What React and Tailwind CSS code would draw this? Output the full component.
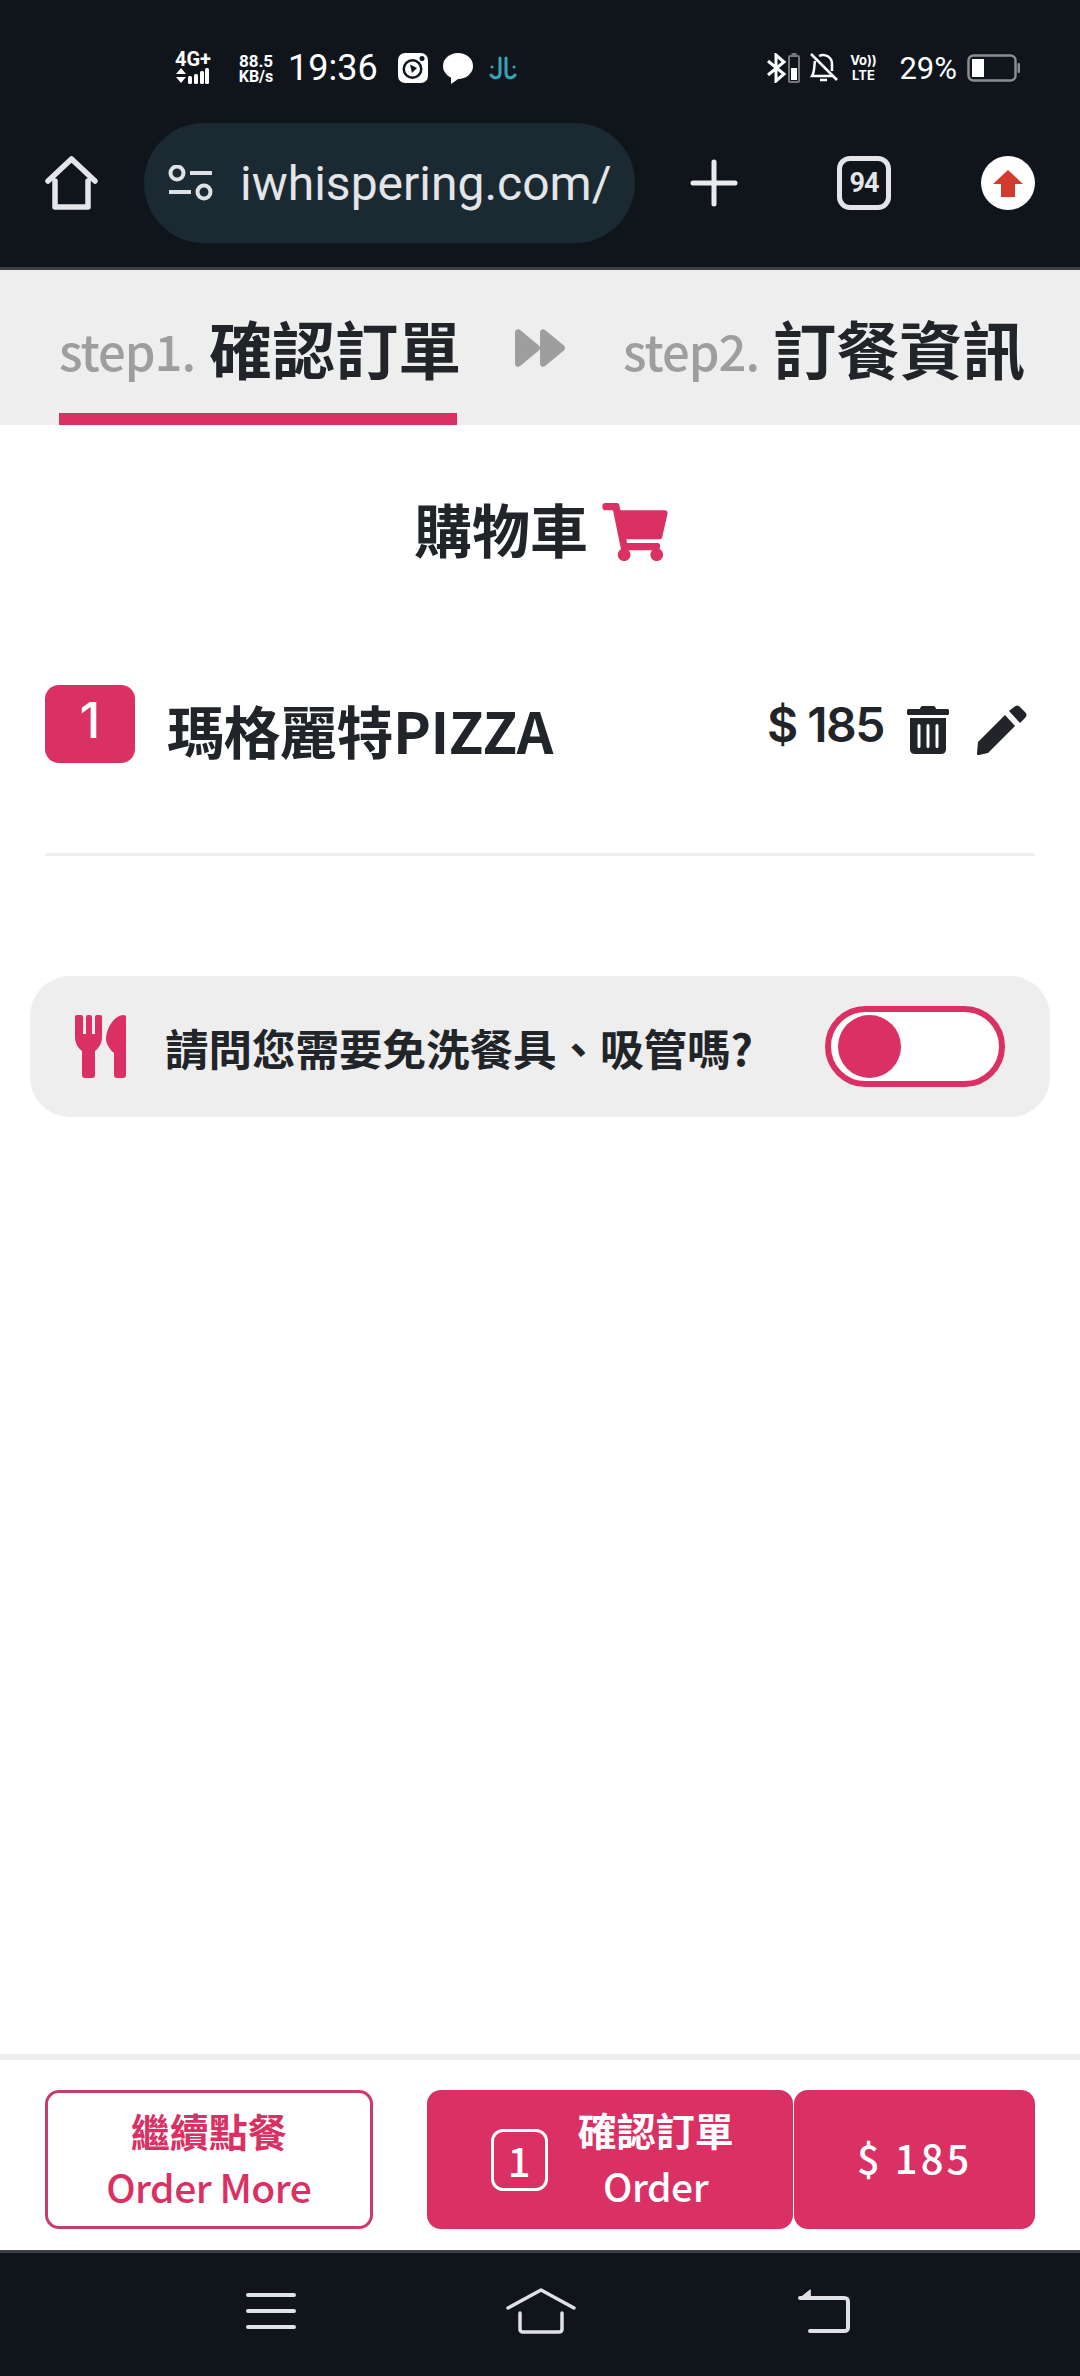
import { FaShoppingCart, FaTrashAlt, FaForward } from "react-icons/fa";

const cjk = { fontFamily: '"Noto Sans CJK TC", "Noto Sans", sans-serif' };

function StatusBar() {
  return (
    <div className="flex h-[100px] items-center pl-[175px] pr-[60px] pt-[36px] text-white font-['Roboto',sans-serif]">
      {/* left side */}
      <div className="flex w-[34px] flex-col">
        <span className="text-[20px] font-bold leading-[15px] font-['Roboto',sans-serif]">4G+</span>
        <svg width="34" height="17" viewBox="0 0 34 17" fill="#fff">
          <path d="M1 7 6 1l5 6zM1 10h10l-5 6z" />
          <rect x="13" y="9" width="4" height="8" rx="1.5" />
          <rect x="19" y="7" width="4" height="10" rx="1.5" />
          <rect x="25" y="4" width="4" height="13" rx="1.5" />
          <rect x="30" y="1" width="4" height="16" rx="1.5" />
        </svg>
      </div>
      <div className="ml-[29px] flex w-[36px] flex-col items-center font-bold font-['Roboto',sans-serif]">
        <span className="text-[17px] leading-[16px]">88.5</span>
        <span className="text-[16px] leading-[15px]">KB/s</span>
      </div>
      <span className="ml-[14px] text-[36px] leading-none">19:36</span>
      <svg className="ml-[20px]" width="30" height="30" viewBox="0 0 30 30">
        <rect width="30" height="30" rx="7" fill="#fff" />
        <circle cx="14.500" cy="16" r="10" fill="#10151c" />
        <circle cx="14.500" cy="16" r="7.500" fill="#fff" />
        <path d="M12 11.500 19 15l-5 5z" fill="#10151c" />
        <circle cx="24" cy="5.500" r="2.500" fill="#10151c" />
      </svg>
      <svg className="ml-[15px]" width="30" height="31" viewBox="0 0 30 31" fill="#fff">
        <ellipse cx="15" cy="13" rx="15" ry="13" />
        <path d="M8 22 8 31 18 24z" />
      </svg>
      <svg className="ml-[16px]" width="28" height="28" viewBox="0 0 28 28" fill="none" stroke="#35a3b8" strokeWidth="3" strokeLinecap="round">
        <path d="M11 4v15c0 6-6 6-9 2M17 4v15c0 6 6 6 9 2" />
        <circle cx="3" cy="13" r="1.500" fill="#35a3b8" stroke="none" />
        <circle cx="25" cy="13" r="1.500" fill="#35a3b8" stroke="none" />
      </svg>

      {/* right side */}
      <svg className="ml-auto" width="20" height="30" viewBox="0 0 20 30" fill="none" stroke="#fff" strokeWidth="3">
        <path d="M1 8 17 21 9 28V2l8 7L1 22" />
      </svg>
      <svg className="ml-px" width="12" height="30" viewBox="0 0 12 30">
        <rect x="3.500" y="0" width="5" height="3" fill="#777" />
        <rect x="1" y="3" width="10" height="26" rx="1" fill="none" stroke="#777" strokeWidth="2" />
        <rect x="3" y="15" width="6" height="12" fill="#fff" />
      </svg>
      <svg className="ml-[10px]" width="28" height="30" viewBox="0 0 28 30" fill="none" stroke="#fff" strokeWidth="2.500">
        <path d="M1 1l26 26M9 3c6-3 13 1 13 8v7M5 8c-1 4 0 10-3 15h21M10 27h7" />
      </svg>
      <div className="ml-[11px] flex w-[28px] flex-col items-center font-bold font-['Inter',sans-serif] text-[13px] leading-[15px]">
        <span>Vo))</span>
        <span>LTE</span>
      </div>
      <span className="ml-[22px] text-[31px] leading-none">29%</span>
      <svg className="ml-[10px]" width="53" height="28" viewBox="0 0 53 28">
        <rect x="1.500" y="1.500" width="47" height="25" rx="5" fill="none" stroke="#8a8d90" strokeWidth="2.500" />
        <rect x="5" y="5" width="12" height="18" fill="#fff" />
        <rect x="50.500" y="9" width="2.500" height="10" rx="1" fill="#8a8d90" />
      </svg>
    </div>
  );
}

function Toolbar() {
  return (
    <div className="flex h-[170px] items-center pb-[1px] pl-[45px] border-b-[3px] border-[#3c4248]">
      <svg width="53" height="54" viewBox="0 0 53 54" fill="none" stroke="#e3e5e8" strokeWidth="5.500" strokeLinejoin="round" strokeLinecap="round">
        <path d="M3 25 26.500 3 50 25M10 25v26h33V25" />
      </svg>
      <div className="ml-[46px] flex h-[120px] w-[491px] items-center rounded-full bg-[#1b2933] pl-[24px]">
        <svg width="45" height="36" viewBox="0 0 45 36" fill="none" stroke="#dfe2e5" strokeWidth="4">
          <circle cx="9" cy="8" r="6.500" />
          <path d="M22 8h22M1 27h22" />
          <circle cx="36" cy="27" r="6.500" />
        </svg>
        <span className="ml-[27px] mt-[2px] text-[48px] leading-none text-[#e3e5e8] font-['Roboto',sans-serif]">iwhispering.com/</span>
      </div>
      <svg className="ml-[55px]" width="48" height="48" viewBox="0 0 48 48" stroke="#e8eaec" strokeWidth="5" strokeLinecap="round">
        <path d="M24 3v42M3 24h42" />
      </svg>
      <div className="ml-[99px] flex h-[54px] w-[54px] items-center justify-center rounded-[13px] border-[5px] border-[#e3e5e8] text-[27px] font-bold tracking-[-1px] text-[#e3e5e8] font-['Roboto',sans-serif]">
        94
      </div>
      <div className="ml-[90px] flex h-[54px] w-[54px] items-center justify-center rounded-full bg-white">
        <svg width="30" height="27" viewBox="0 0 30 27" fill="#d23b2e">
          <path d="M15 0 30 14H22V27H8V14H0z" />
        </svg>
      </div>
    </div>
  );
}

function Steps() {
  return (
    <div className="flex h-[155px] items-center whitespace-nowrap bg-[#eeeeee] pl-[59px]" style={cjk}>
      <div className="relative flex h-full w-[398px] items-center">
        <span className="mt-[5px] text-[49px] font-medium text-[#9e9e9e] -tracking-[1px]">step1.</span>
        <span className="ml-[14px] text-[63px] font-bold text-[#212529]">確認訂單</span>
        <div className="absolute bottom-0 left-0 right-0 h-[12px] bg-[#da3063]" />
      </div>
      <FaForward className="ml-[58px] text-[50px] text-[#9e9e9e]" />
      <span className="ml-[58px] mt-[5px] text-[49px] font-medium text-[#9e9e9e] -tracking-[1px]">step2.</span>
      <span className="ml-[14px] text-[63px] font-bold text-[#212529]">訂餐資訊</span>
    </div>
  );
}

function CartItem() {
  return (
    <div className="mx-[45px] flex h-[221px] items-start border-b-[3px] border-[#eeeeee] pt-[50px]">
      <div className="flex h-[78px] w-[90px] items-center justify-center rounded-[14px] bg-[#da3063] pb-[8px] text-[50px] font-medium text-white font-['Inter',sans-serif]">
        1
      </div>
      <span className="ml-[32px] mt-[16px] text-[57px] font-bold leading-none text-[#212529] -tracking-[0.5px]" style={cjk}>
        瑪格麗特PIZZA
      </span>
      <span className="ml-auto mt-[16px] text-[48px] font-semibold leading-none text-[#212529] font-['Inter',sans-serif] -tracking-[1.5px]">
        $ 185
      </span>
      <FaTrashAlt className="ml-[23px] mt-[20px] h-[50px] w-[42px] text-[#212529]" />
      <svg className="ml-[28px] mr-[8px] mt-[20px]" width="50" height="50" viewBox="0 0 50 50" fill="#212529">
        <path d="M1 37 28 10l10 11-27 27-9 2a1.500 1.500 0 0 1-2-2z" />
        <path d="M32 6l5-4c2-2 4-2 6 0l5 5c2 2 2 4 0 6l-5 5z" />
      </svg>
    </div>
  );
}

function CutleryPanel() {
  return (
    <div className="mx-[30px] mt-[120px] flex h-[141px] items-center rounded-[40px] bg-[#eeeeee] pl-[45px] pr-[45px]">
      <svg width="51" height="63" viewBox="0 0 51 63" fill="#da3063">
        <path d="M2 0h4a2 2 0 0 1 2 2v17h3V2a2 2 0 0 1 2-2h2a2 2 0 0 1 2 2v17h3V2a2 2 0 0 1 2-2h3a2 2 0 0 1 2 2v20c0 6-3 11-7 14v24a3 3 0 0 1-3 3h-7a3 3 0 0 1-3-3V36C3 33 0 28 0 22V2a2 2 0 0 1 2-2z" />
        <path d="M49 0a2 2 0 0 1 2 2v58a3 3 0 0 1-3 3h-6a3 3 0 0 1-3-3V38c-5-4-8-10-8-14 0-10 8-24 18-24z" />
      </svg>
      <span className="ml-[39px] mt-[3px] text-[43.500px] font-bold leading-none text-[#212529] whitespace-nowrap" style={cjk}>
        請問您需要免洗餐具、吸管嗎?
      </span>
      <div className="ml-auto flex h-[81px] w-[180px] items-center rounded-full border-[6px] border-[#da3063] bg-white pl-[7px]">
        <div className="h-[63px] w-[63px] rounded-full bg-[#da3063]" />
      </div>
    </div>
  );
}

function BottomBar() {
  return (
    <div className="flex h-[196px] items-start border-t-[6px] border-[#eeeeee] px-[45px] pt-[30px]" style={cjk}>
      <div className="flex h-[139px] w-[328px] flex-col items-center justify-center rounded-[14px] border-[3px] border-[#c93c68] pb-[4px] text-[#da3063]">
        <span className="text-[39px] font-bold leading-[56px]">繼續點餐</span>
        <span className="text-[39px] font-medium leading-[56px] -tracking-[0.5px]">Order More</span>
      </div>
      <div className="ml-[54px] flex h-[139px] w-[367px] items-center rounded-[14px] bg-[#da3063] pl-[64px] text-white">
        <div className="flex h-[62px] w-[57px] items-center justify-center rounded-[12px] border-[3px] border-white text-[40px] font-medium">1</div>
        <div className="ml-[30px] flex flex-col items-center pb-[5px]">
          <span className="text-[39px] font-bold leading-[56px]">確認訂單</span>
          <span className="text-[39px] font-medium leading-[56px] -tracking-[0.5px]">Order</span>
        </div>
      </div>
      <div className="ml-[1px] flex h-[139px] w-[241px] items-center justify-center rounded-[14px] bg-[#da3063] pb-[5px] text-[40px] font-medium tracking-[3px] text-white">
        $ 185
      </div>
    </div>
  );
}

function NavBar() {
  return (
    <div className="flex h-[126px] items-start border-t-[3px] border-[#3c4248] bg-[#10151c] pl-[246px] pt-[38px]">
      <svg width="50" height="40" viewBox="0 0 50 40" stroke="#dfe1e4" strokeWidth="4" strokeLinecap="round">
        <path d="M2 4h46M2 20h46M2 36h46" />
      </svg>
      <svg className="ml-[210px] -mt-[3px]" width="70" height="46" viewBox="0 0 70 46" fill="none" stroke="#dfe1e4" strokeWidth="3.500" strokeLinecap="round" strokeLinejoin="round">
        <path d="M2 20 35 2 68 20M14 25v16c0 2 1 3 3 3h36c2 0 3-1 3-3V25" />
      </svg>
      <svg className="ml-[222px] -mt-[2px]" width="52" height="44" viewBox="0 0 52 44" fill="none" stroke="#dfe1e4" strokeWidth="4" strokeLinecap="round" strokeLinejoin="round">
        <path d="M2 9h44c3 0 4 1 4 4v25c0 3-1 4-4 4H12" />
        <path d="M12 1 2 9h10z" fill="#dfe1e4" strokeWidth="1" />
      </svg>
    </div>
  );
}

export default function App() {
  return (
    <div className="flex h-[2376px] w-[1080px] flex-col overflow-hidden bg-white">
      <div className="bg-[#10151c]">
        <StatusBar />
        <Toolbar />
      </div>
      <Steps />
      <div className="flex-1">
        <div className="flex h-[210px] items-start justify-center pl-[2px] pt-[72px]" style={cjk}>
          <span className="text-[58px] font-bold leading-[62px] text-[#212529]">購物車</span>
          <FaShoppingCart className="ml-[14px] mt-[6px] h-[58px] w-[66px] text-[#da3063]" />
        </div>
        <CartItem />
        <CutleryPanel />
      </div>
      <BottomBar />
      <NavBar />
    </div>
  );
}
